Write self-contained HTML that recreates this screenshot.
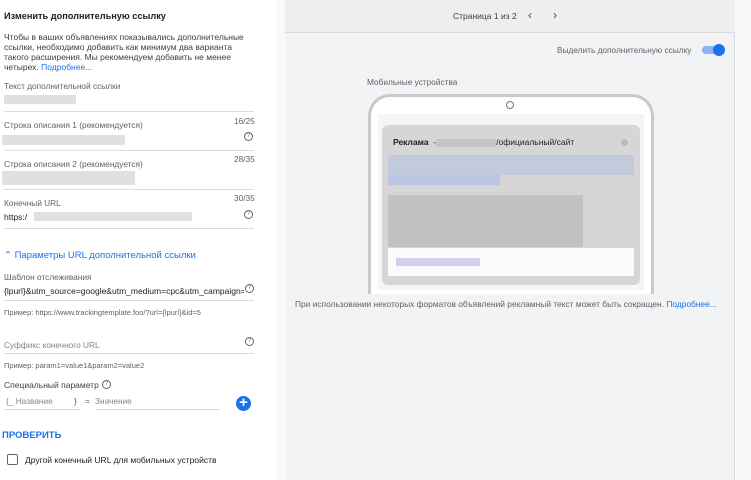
<!DOCTYPE html>
<html><head><meta charset="utf-8"><style>
*{margin:0;padding:0;box-sizing:border-box}
body{width:751px;height:480px;overflow:hidden;background:#f8f9fa;font-family:"Liberation Sans","Noto Sans CJK SC",sans-serif;position:relative;color:#3c4043}
.a{position:absolute;white-space:nowrap}
.left{left:0;top:0;width:276px;height:480px;background:#fff}
.t{font-size:8.3px;color:#5f6368}
.ln{height:1px;background:#dadce0}
.blur{background:#e0e0e0}
.q{width:9px;height:9px;border:1px solid #5f6368;border-radius:50%;font-size:6px;text-align:center;line-height:7px;color:#5f6368}
</style></head><body>
<div class="a left">
<div class="a" style="left:4px;top:11px;font-size:9.2px;font-weight:bold;color:#202124">Изменить дополнительную ссылку</div>
<div class="a" style="left:4px;top:32px;font-size:8.5px;line-height:10px;color:#3c4043;width:250px;white-space:normal">Чтобы в ваших объявлениях показывались дополнительные ссылки, необходимо добавить как минимум два варианта такого расширения. Мы рекомендуем добавить не менее четырех. <span style="color:#1a73e8">Подробнее...</span></div>
<div class="a t" style="left:4px;top:81px">Текст дополнительной ссылки</div>
<div class="a blur" style="left:4px;top:95px;width:72px;height:9px"></div>
<div class="a ln" style="left:4px;top:111px;width:250px"></div>
<div class="a t" style="left:234px;top:116px">16/25</div>
<div class="a t" style="left:4px;top:120px">Строка описания 1 (рекомендуется)</div>
<div class="a blur" style="left:2px;top:135px;width:123px;height:10px"></div>
<div class="a q" style="left:244px;top:132px">?</div>
<div class="a ln" style="left:4px;top:150px;width:250px"></div>
<div class="a t" style="left:234px;top:154px">28/35</div>
<div class="a t" style="left:4px;top:159px">Строка описания 2 (рекомендуется)</div>
<div class="a blur" style="left:2px;top:171px;width:133px;height:14px"></div>
<div class="a ln" style="left:4px;top:189px;width:250px"></div>
<div class="a t" style="left:234px;top:193px">30/35</div>
<div class="a t" style="left:4px;top:198px">Конечный URL</div>
<div class="a" style="left:4px;top:212px;font-size:8.5px;color:#202124">https:/</div>
<div class="a blur" style="left:34px;top:212px;width:158px;height:9px"></div>
<div class="a q" style="left:244px;top:210px">?</div>
<div class="a ln" style="left:4px;top:228px;width:250px"></div>
<div class="a" style="left:4px;top:250px;font-size:9.5px;color:#1a73e8">⌃ Параметры URL дополнительной ссылки</div>
<div class="a t" style="left:4px;top:272px">Шаблон отслеживания</div>
<div class="a" style="left:4px;top:286px;font-size:8.5px;color:#202124;width:240px;overflow:hidden">{lpurl}&amp;utm_source=google&amp;utm_medium=cpc&amp;utm_campaign=</div>
<div class="a q" style="left:245px;top:284px">?</div>
<div class="a ln" style="left:4px;top:300px;width:250px"></div>
<div class="a t" style="left:4px;top:308px;font-size:7.5px">Пример: https://www.trackingtemplate.foo/?url={lpurl}&amp;id=5</div>
<div class="a t" style="left:4px;top:340px;color:#80868b">Суффикс конечного URL</div>
<div class="a q" style="left:245px;top:337px">?</div>
<div class="a ln" style="left:4px;top:353px;width:250px"></div>
<div class="a t" style="left:4px;top:361px;font-size:7.5px">Пример: param1=value1&amp;param2=value2</div>
<div class="a" style="left:4px;top:380px;font-size:8.5px;color:#3c4043">Специальный параметр</div>
<div class="a q" style="left:102px;top:380px">?</div>
<div class="a t" style="left:6px;top:396px;color:#80868b">{_ Название</div>
<div class="a t" style="left:74px;top:396px">}</div>
<div class="a t" style="left:85px;top:396px">=</div>
<div class="a t" style="left:95px;top:396px;color:#80868b">Значение</div>
<div class="a ln" style="left:4px;top:409px;width:76px"></div>
<div class="a ln" style="left:95px;top:409px;width:125px"></div>
<div class="a" style="left:236px;top:396px;width:15px;height:15px;border-radius:50%;background:#1a73e8;color:#fff;font-size:15px;line-height:14px;text-align:center;font-weight:bold">+</div>
<div class="a" style="left:2px;top:430px;font-size:9.5px;font-weight:bold;color:#1a73e8">ПРОВЕРИТЬ</div>
<div class="a" style="left:7px;top:454px;width:11px;height:11px;border:1.5px solid #5f6368;border-radius:2px"></div>
<div class="a" style="left:25px;top:455px;font-size:8.5px;color:#202124">Другой конечный URL для мобильных устройств</div>
</div>
<div class="a" style="left:285px;top:0;width:450px;height:480px;background:#f1f3f4;border-right:1px solid #dadce0"></div>
<div class="a" style="left:285px;top:0;width:450px;height:33px;background:#eceef0;border-bottom:1px solid #dadce0"></div>
<div class="a" style="left:453px;top:11px;font-size:8.5px;color:#3c4043">Страница 1 из 2</div>
<div class="a" style="left:528px;top:8px;font-size:12px;color:#3c4043">‹</div>
<div class="a" style="left:553px;top:8px;font-size:12px;color:#3c4043">›</div>
<div class="a t" style="left:557px;top:45px">Выделить дополнительную ссылку</div>
<div class="a" style="left:702px;top:46px;width:20px;height:8px;border-radius:4px;background:#8ab4f8"></div>
<div class="a" style="left:713px;top:44px;width:12px;height:12px;border-radius:50%;background:#1a73e8"></div>
<div class="a t" style="left:367px;top:77px">Мобильные устройства</div>
<div class="a" style="left:368px;top:94px;width:286px;height:200px;border:3px solid #c8c9cb;border-bottom:none;border-radius:22px 22px 0 0;background:#fff"></div>
<div class="a" style="left:506px;top:101px;width:8px;height:8px;border:1px solid #777;border-radius:50%"></div>
<div class="a" style="left:378px;top:114px;width:266px;height:176px;background:#f5f5f5"></div>
<div class="a" style="left:382px;top:125px;width:258px;height:160px;border-radius:6px;background:#d6d6d6"></div>
<div class="a" style="left:393px;top:137px;font-size:8.5px;color:#202124"><b>Реклама</b> &nbsp;-<span style="display:inline-block;width:60px;height:8px;background:#c4c4c4;vertical-align:middle"></span>/официальный/сайт</div>
<div class="a" style="left:621px;top:139px;width:7px;height:7px;border-radius:50%;background:#bbb"></div>
<div class="a" style="left:388px;top:155px;width:246px;height:20px;background:#c2cbdc"></div>
<div class="a" style="left:388px;top:175px;width:112px;height:10px;background:#bac6e0"></div>
<div class="a" style="left:388px;top:195px;width:195px;height:52px;background:#c2c2c2"></div>
<div class="a" style="left:388px;top:248px;width:246px;height:28px;background:#fbfbfb"></div>
<div class="a" style="left:396px;top:258px;width:84px;height:8px;background:#d4cff2"></div>
<div class="a" style="left:295px;top:299px;font-size:8.4px;color:#5f6368">При использовании некоторых форматов объявлений рекламный текст может быть сокращен. <span style="color:#1a73e8">Подробнее...</span></div>
</body></html>
